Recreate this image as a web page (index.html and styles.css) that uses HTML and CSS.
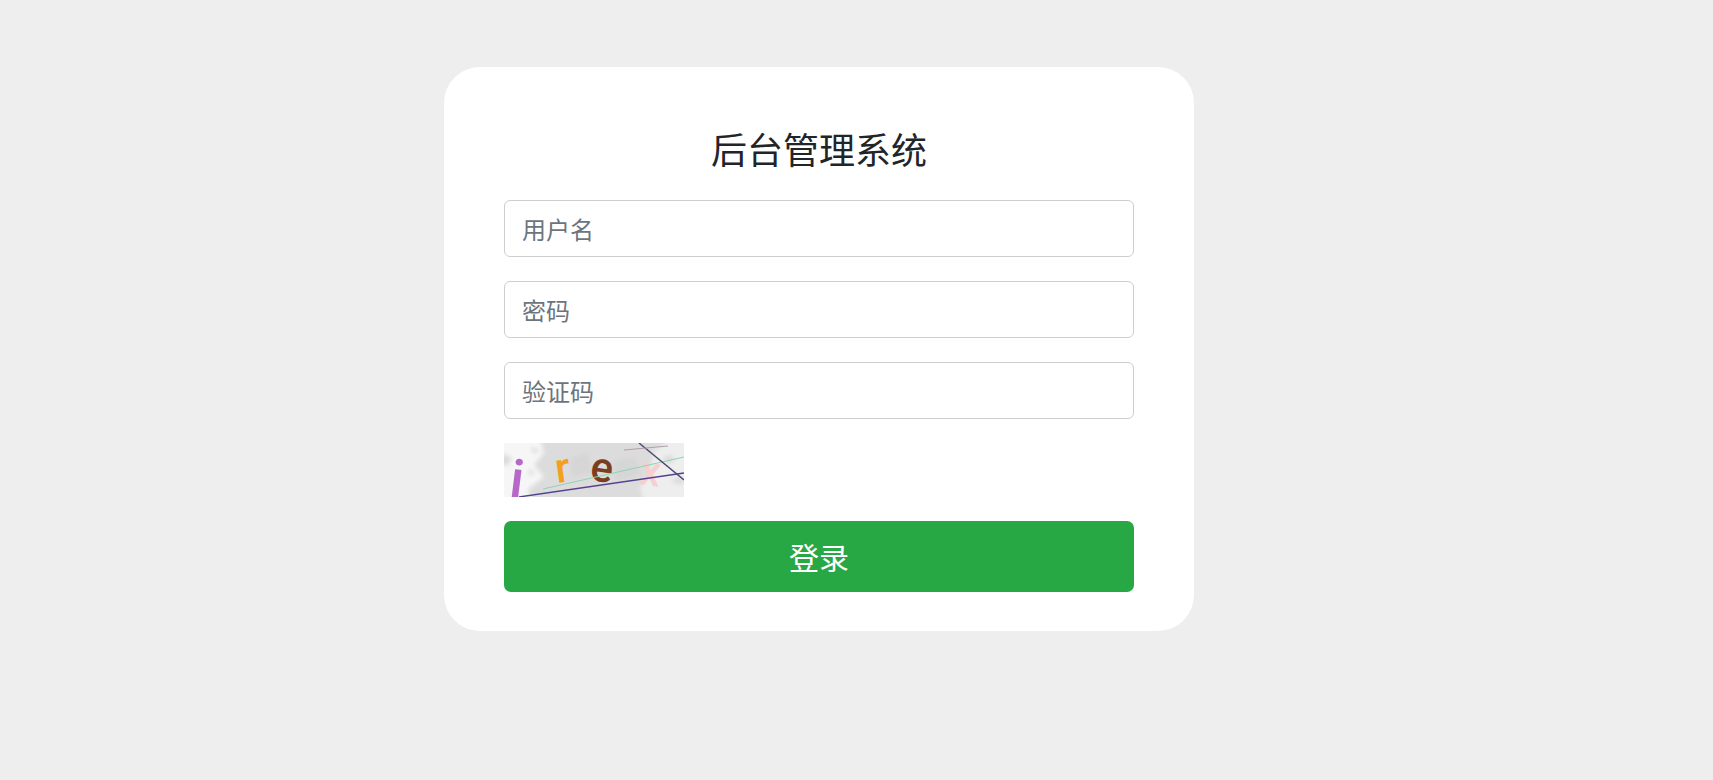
FILE: index.html
```
<!DOCTYPE html>
<html lang="zh-CN">
<head>
    <meta charset="UTF-8">
    <meta name="viewport" content="width=device-width, initial-scale=1.0">
    <title>后台管理系统</title>
    <link rel="stylesheet" href="styles.css">
</head>
<body>

<main class="login-box">
    <h1>后台管理系统</h1>
    <form>
        <input type="text" class="form-control" name="username" placeholder="用户名" aria-label="用户名">
        <input type="password" class="form-control" name="password" placeholder="密码" aria-label="密码">
        <input type="text" class="form-control" name="captcha" placeholder="验证码" aria-label="验证码">

        <svg class="captcha" viewBox="0 0 180 54" role="img" aria-label="验证码">
            <defs>
                <filter id="soft" x="-20%" y="-20%" width="140%" height="140%">
                    <feGaussianBlur stdDeviation="2"/>
                </filter>
            </defs>
            <rect width="180" height="54" fill="#dcdcdc"/>
            <!-- 背景斑点 -->
            <g filter="url(#soft)">
                <path d="M-5 -5H36L40 10 30 22 40 34 24 46 28 60H-5Z" fill="#f6f6f6"/>
                <path d="M140 60L136 44 146 28 150 8 168 -5H190V60Z" fill="#eee"/>
                <path d="M-4 10L8 14 5 22-4 22ZM26 4L36 7 30 11ZM24 26L31 29 26 34ZM158 14L168 12 171 19 163 21ZM168 36L180 33V41L170 41Z" fill="#dcdcdc"/>
                <path d="M66 16L84 10 88 30 68 34ZM108 18L132 14 136 32 112 38Z" fill="#d6d6d6"/>
            </g>
            <g class="captcha-text">
                <text class="first" x="4" y="54" fill="#b668c8" transform="rotate(7 4 54)">i</text>
                <text x="53" y="40" fill="#f2a01e" transform="rotate(-8 53 40)">r</text>
                <text x="85" y="37" fill="#7a3d22" transform="rotate(8 85 37)">e</text>
                <text x="134" y="41" fill="#f6cfd0" transform="rotate(8 134 41)">x</text>
            </g>
            <g fill="none">
                <path d="M39 46L180 14" stroke="#8fd3b4"/>
                <path d="M15 54L180 30" stroke="#54418f" stroke-width="1.4"/>
                <path d="M135 0L180 37" stroke="#4c4673" stroke-width="1.4"/>
                <path d="M120 7L164 3" stroke="#b29cae"/>
            </g>
        </svg>

        <button type="submit" class="btn-login">登录</button>
    </form>
</main>

</body>
</html>
```

FILE: styles.css
```
* {
    box-sizing: border-box;
}
body {
    font-family: "Noto Sans CJK SC", sans-serif;
    background-color: #eee;
    color: #212529;
    margin: 0;
    padding: 67px 75px 67px 0;
}
.login-box {
    max-width: 750px;
    margin: 0 auto;
    padding: 59px 60px 39px;
    background: #fff;
    border-radius: 36px;
}
h1 {
    margin: 0 0 29px;
    font-size: 36px;
    font-weight: 400;
    line-height: 45px;
    text-align: center;
}
form {
    display: flex;
    flex-direction: column;
    gap: 24px;
}
.form-control {
    width: 100%;
    height: 57px;
    padding: 8px 17px;
    font-family: inherit;
    font-size: 24px;
    color: #495057;
    background: #fff;
    border: 1px solid #ccced0;
    border-radius: 6px;
}
.form-control::placeholder {
    color: #6c757d;
    opacity: 1;
}
.captcha {
    display: block;
    width: 180px;
    height: 54px;
    cursor: pointer;
}
.captcha-text {
    font-family: Roboto, "Liberation Sans", sans-serif;
    font-size: 42px;
    font-weight: 500;
}
.captcha-text .first {
    font-size: 54px;
}
.btn-login {
    height: 71px;
    padding: 0 24px 2px;
    font-family: inherit;
    font-size: 30px;
    color: #fff;
    background-color: #28a745;
    border: none;
    border-radius: 7px;
    cursor: pointer;
}
.btn-login:hover {
    background-color: #218838;
}
```
